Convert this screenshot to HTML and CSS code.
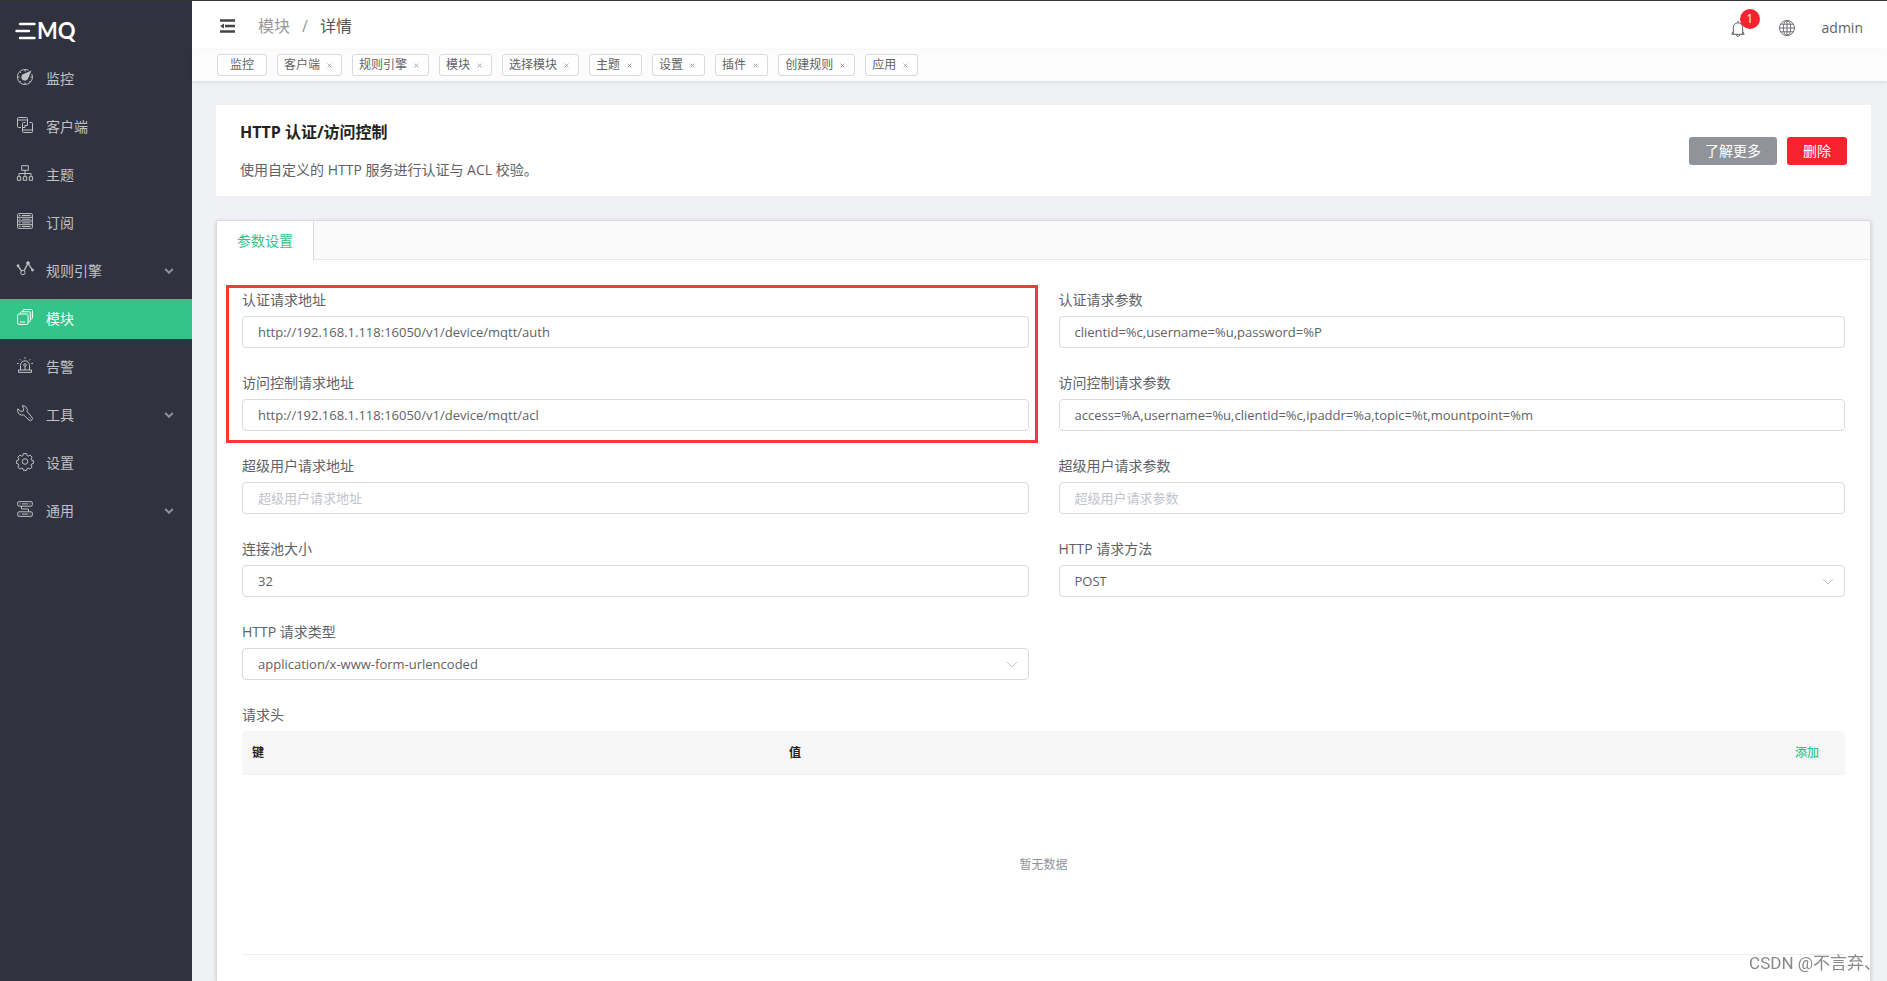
FILE: index.html
```html
<!DOCTYPE html>
<html lang="zh-CN">
<head>
<meta charset="utf-8">
<title>EMQ</title>
<link rel="stylesheet" href="styles.css">
</head>
<body>
<div class="app">
  <aside class="sidebar">
    <div class="logo">
      <svg class="logo-bars" width="22" height="18" viewBox="0 0 22 18" fill="none" stroke="#fff" stroke-width="2.4" stroke-linecap="round"><path d="M5 2H19.500M1.500 9H14M5 16H19.500"/></svg>
      <span class="logo-text">MQ</span>
    </div>
    <nav class="menu">
      <a class="item" href="#"><svg class="icon" viewBox="0 0 16 16"><path d="M11.500 1.400A7.500 7.500 0 1 0 14.800 5"/><path d="M8 .5v2M8 13.500v2M.5 8h2M13.500 8h2M2.700 2.700l1.200 1.200M2.700 13.300l1.200-1.200M13.300 13.300l-1.200-1.200"/><path class="solid" stroke="none" d="M14.500 1.500L11.200 9.200A3.500 3.500 0 1 1 7.200 4.700z"/></svg><span>监控</span></a>
      <a class="item" href="#"><svg class="icon" viewBox="0 0 16 16"><path d="M4 10.500H1.500a1 1 0 0 1-1-1v-8a1 1 0 0 1 1-1h8a1 1 0 0 1 1 1V4M.5 3h10M8.500 5.500h-2a1 1 0 0 0-1 1v8a1 1 0 0 0 1 1h8a1 1 0 0 0 1-1v-8a1 1 0 0 0-1-1h-2M5.500 13h10M5.500 10.500H8V8M10.500 4v4.500H8"/></svg><span>客户端</span></a>
      <a class="item" href="#"><svg class="icon" viewBox="0 0 16 16"><path d="M4.700.7h6.600v4.600H4.700zM8 5.300v6M2 11.500V8.500h12v3M.4 11.700h3.300v3.600H.4zM6.300 11.700h3.400v3.600H6.300zM12.300 11.700h3.300v3.600h-3.300z"/></svg><span>主题</span></a>
      <a class="item" href="#"><svg class="icon" viewBox="0 0 16 16"><rect x=".6" y=".6" width="14.800" height="14.800" rx="1"/><path d="M.5 4.300h15M.5 8h15M.5 11.700h15M5 2.500h8.500M2 2.500h1.500M5 6.200h8.500M2 6.200h1.500M5 9.900h8.500M2 9.900h1.500M5 13.500h8.500M2 13.500h1.500"/></svg><span>订阅</span></a>
      <a class="item" href="#"><svg class="icon" viewBox="0 0 16 16"><path stroke-width="1.300" d="M1 5l3.700 5.200M7.200 9.500l3.300-6.500M11.500 3l4 6"/><circle cx="5.900" cy="11.500" r="2.200"/><circle class="solid" cx="1" cy="4.700" r="1"/><circle class="solid" cx="11" cy="2" r="1.300"/><circle class="solid" cx="15.500" cy="9" r="1"/></svg><span>规则引擎</span><svg class="caret" viewBox="0 0 10 6"><path d="M1.200 1L5 4.700 8.800 1"/></svg></a>
      <a class="item active" href="#"><svg class="icon" viewBox="0 0 16 16"><rect x=".6" y="5" width="10.500" height="10.400" rx="1.500"/><path d="M3 13h5M3.300 4.500V3.800a1 1 0 0 1 1-1h8a1 1 0 0 1 1 1v8a1 1 0 0 1-1 1h-.7M6 2.500v-1a1 1 0 0 1 1-1h7.400a1 1 0 0 1 1 1v7.400a1 1 0 0 1-1 1h-.9"/></svg><span>模块</span></a>
      <a class="item" href="#"><svg class="icon" viewBox="0 0 16 16"><path d="M1.500 13h13v2.400h-13zM3.500 13V8.300a4.500 4.500 0 0 1 9 0V13M8 9.500V13M8 .2v1.600M2.600 2.200l1.200 1.200M13.400 2.200l-1.200 1.200M0 6.500h1.700M14.300 6.500H16"/><circle cx="8" cy="8" r="1.300"/></svg><span>告警</span></a>
      <a class="item" href="#"><svg class="icon" viewBox="0 0 16 16"><path d="M5.200.6a4.800 4.800 0 0 1 5 6l4.600 5.500a2 2 0 0 1-2.800 2.900L6.700 10A4.800 4.800 0 0 1 .8 3.800l3 2.700 2.500-.5.400-2.400z"/><path d="M12.500 12.500l1 1"/></svg><span>工具</span><svg class="caret" viewBox="0 0 10 6"><path d="M1.200 1L5 4.700 8.800 1"/></svg></a>
      <a class="item" href="#"><svg class="icon" viewBox="0 0 16 16"><path d="M6.500.6h3l.5 2 1.300.5 1.800-1 2 2.100-1 1.800.5 1.200 1.800.5v2.800l-1.800.5-.6 1.200 1 1.900-2 2-1.800-1-1.200.5-.5 1.800h-3l-.5-1.800-1.300-.5-1.800 1-2-2 1-1.900-.5-1.200-1.800-.5V7.700l1.800-.5.500-1.200-1-1.800 2-2.100 1.800 1L6 2.600z"/><circle cx="8" cy="8.500" r="2.800"/></svg><span>设置</span></a>
      <a class="item" href="#"><svg class="icon" viewBox="0 0 16 16"><rect x=".6" y=".6" width="14.800" height="4.600" rx="1.500"/><rect x=".6" y="10.800" width="14.800" height="4.600" rx="1.500"/><path d="M5 2.900h6M5 13.100h6M2.500 2.900h1M12.500 2.900h1M2.500 13.100h1M12.500 13.100h1M4.500 5.200V8h7v2.800"/></svg><span>通用</span><svg class="caret" viewBox="0 0 10 6"><path d="M1.200 1L5 4.700 8.800 1"/></svg></a>
    </nav>
  </aside>
  <div class="page">
    <header class="topbar">
      <button class="fold" type="button" aria-label="收起菜单"><svg width="15" height="14" viewBox="0 0 15 14"><path d="M0 1.500h15M5 7h10M0 12.500h15" stroke="#444" stroke-width="2.400"/><path d="M0 7l4-2.500v5z" fill="#444"/></svg></button>
      <div class="crumbs"><a href="#">模块</a><span class="slash">/</span><span class="here">详情</span></div>
      <div class="tools">
        <button class="bell" type="button" aria-label="告警"><svg width="14" height="17" viewBox="0 0 14 17" fill="none" stroke="#606266"><path d="M.7 14.300h12.600M2.300 14.200V7.500a4.700 4.700 0 0 1 9.400 0v6.700M7 2.700V.8M5.200 14.500a1.800 1.800 0 0 0 3.600 0M2.300 11.500L.9 14.200M11.700 11.500l1.400 2.700"/></svg><span class="badge">1</span></button>
        <button class="globe" type="button" aria-label="语言"><svg width="16" height="16" viewBox="0 0 16 16" fill="none" stroke="#606266" stroke-width=".9"><circle cx="8" cy="8" r="7.500"/><ellipse cx="8" cy="8" rx="3.700" ry="7.500"/><path d="M8 .5v15M.5 8h15M1.700 4.200h12.600M1.700 11.800h12.600"/></svg></button>
        <a class="user" href="#">admin</a>
      </div>
    </header>
    <div class="tags">
      <a class="tag home" href="#">监控</a>
      <a class="tag" href="#">客户端<svg class="close" viewBox="0 0 6 6"><path d="M.7.7l4.600 4.600M5.300.7L.7 5.300"/></svg></a>
      <a class="tag" href="#">规则引擎<svg class="close" viewBox="0 0 6 6"><path d="M.7.7l4.600 4.600M5.300.7L.7 5.300"/></svg></a>
      <a class="tag" href="#">模块<svg class="close" viewBox="0 0 6 6"><path d="M.7.7l4.600 4.600M5.300.7L.7 5.300"/></svg></a>
      <a class="tag" href="#">选择模块<svg class="close" viewBox="0 0 6 6"><path d="M.7.7l4.600 4.600M5.300.7L.7 5.300"/></svg></a>
      <a class="tag" href="#">主题<svg class="close" viewBox="0 0 6 6"><path d="M.7.7l4.600 4.600M5.300.7L.7 5.300"/></svg></a>
      <a class="tag" href="#">设置<svg class="close" viewBox="0 0 6 6"><path d="M.7.7l4.600 4.600M5.300.7L.7 5.300"/></svg></a>
      <a class="tag" href="#">插件<svg class="close" viewBox="0 0 6 6"><path d="M.7.7l4.600 4.600M5.300.7L.7 5.300"/></svg></a>
      <a class="tag" href="#">创建规则<svg class="close" viewBox="0 0 6 6"><path d="M.7.7l4.600 4.600M5.300.7L.7 5.300"/></svg></a>
      <a class="tag" href="#">应用<svg class="close" viewBox="0 0 6 6"><path d="M.7.7l4.600 4.600M5.300.7L.7 5.300"/></svg></a>
    </div>
    <main class="content">
      <section class="intro">
        <div>
          <h1>HTTP 认证/访问控制</h1>
          <p>使用自定义的 HTTP 服务进行认证与 ACL 校验。</p>
        </div>
        <div class="actions">
          <button class="btn" type="button">了解更多</button>
          <button class="btn danger" type="button">删除</button>
        </div>
      </section>
      <section class="panel">
        <div class="tabs"><button class="tab" type="button">参数设置</button></div>
        <form class="form">
          <div class="field"><label for="auth-url">认证请求地址</label><input id="auth-url" type="text" value="http://192.168.1.118:16050/v1/device/mqtt/auth"></div>
          <div class="field"><label for="auth-params">认证请求参数</label><input id="auth-params" type="text" value="clientid=%c,username=%u,password=%P"></div>
          <div class="field"><label for="acl-url">访问控制请求地址</label><input id="acl-url" type="text" value="http://192.168.1.118:16050/v1/device/mqtt/acl"></div>
          <div class="field"><label for="acl-params">访问控制请求参数</label><input id="acl-params" type="text" value="access=%A,username=%u,clientid=%c,ipaddr=%a,topic=%t,mountpoint=%m"></div>
          <div class="field"><label for="super-url">超级用户请求地址</label><input id="super-url" type="text" placeholder="超级用户请求地址"></div>
          <div class="field"><label for="super-params">超级用户请求参数</label><input id="super-params" type="text" placeholder="超级用户请求参数"></div>
          <div class="field"><label for="pool">连接池大小</label><input id="pool" type="text" value="32"></div>
          <div class="field"><label for="method">HTTP 请求方法</label><div class="select"><select id="method"><option>POST</option><option>GET</option></select><svg class="arrow" viewBox="0 0 12 8"><path d="M1 1l5 5 5-5"/></svg></div></div>
          <div class="field"><label for="ctype">HTTP 请求类型</label><div class="select"><select id="ctype"><option>application/x-www-form-urlencoded</option><option>application/json</option></select><svg class="arrow" viewBox="0 0 12 8"><path d="M1 1l5 5 5-5"/></svg></div></div>
          <div class="field wide">
            <span class="label" id="headers-label">请求头</span>
            <table class="headers" aria-labelledby="headers-label">
              <thead><tr><th class="key">键</th><th>值</th><th class="add"><button type="button">添加</button></th></tr></thead>
              <tbody><tr><td class="empty" colspan="3">暂无数据</td></tr></tbody>
            </table>
          </div>
          <div class="highlight"></div>
        </form>
      </section>
    </main>
  </div>
</div>
<div class="watermark">CSDN @不言弃、</div>
</body>
</html>
```
FILE: styles.css
```css
* { box-sizing: border-box; }

body {
  margin: 0;
  color: #606266;
  font: 14px/20px "Open Sans", "Noto Sans CJK SC", sans-serif;
}

a { color: inherit; text-decoration: none; }
button, input, select { font-family: inherit; margin: 0; }
button { cursor: pointer; }

.app {
  display: flex;
  height: 100vh;
  overflow: hidden;
  border-top: 1px solid #363636;
  background: #f0f1f5;
}

/* Sidebar */
.sidebar { flex: none; width: 192px; background: #30333f; color: #c1c2c5; }
.logo { display: flex; align-items: center; height: 58px; padding: 2px 0 0 15px; color: #fff; }
.logo-text { font: 700 22px/24px Lato, sans-serif; }
.menu { display: flex; flex-direction: column; gap: 8px; }
.item { display: flex; align-items: center; height: 40px; padding: 0 18px 0 17px; }
.item.active { background: #34c388; color: #fff; }
.icon {
  width: 16px;
  height: 16px;
  margin: 0 13px 4px 0;
  overflow: visible;
  fill: none;
  stroke: currentColor;
}
.icon .solid { fill: currentColor; }
.caret { width: 10px; height: 6px; margin-left: auto; fill: none; stroke: #909399; stroke-width: 2; }

/* Header */
.page { flex: 1; min-width: 0; display: flex; flex-direction: column; }
.topbar { flex: none; display: flex; align-items: center; height: 49px; padding: 0 24px 0 28px; background: #fff; }
.topbar button { display: flex; padding: 0; border: 0; background: none; }
.crumbs { display: flex; margin-left: 23px; font-size: 16px; line-height: 20px; color: #999; }
.slash { padding: 0 12px; }
.here { color: #555; }
.tools { display: flex; align-items: center; margin-left: auto; padding-top: 5px; }
.topbar .bell { position: relative; margin-right: 34px; }
.topbar .globe { margin-right: 27px; }
.badge {
  position: absolute;
  top: -11px;
  left: 9px;
  width: 20px;
  height: 20px;
  border-radius: 10px;
  background: #f9222f;
  color: #fff;
  font-size: 12px;
  line-height: 20px;
  text-align: center;
}
.tags {
  flex: none;
  display: flex;
  gap: 10px;
  height: 31px;
  padding: 4px 25px;
  background: #fcfcfc;
  box-shadow: 0 1px 4px rgba(0, 21, 41, .12);
}
.tag {
  display: flex;
  align-items: center;
  height: 22px;
  padding: 0 9px 0 6px;
  border: 1px solid #d8dadc;
  border-radius: 3px;
  background: #fff;
  font-size: 12px;
}
.tag.home { padding: 0 12px; }
.close { width: 5px; height: 5px; margin-left: 7px; fill: none; stroke: #999; stroke-width: 1; }

/* Content */
.content { flex: 1; display: flex; flex-direction: column; gap: 24px; padding: 24px 16px 0 24px; }
.intro {
  display: flex;
  align-items: center;
  justify-content: space-between;
  height: 91px;
  padding: 0 24px;
  background: #fff;
}
.intro h1 { margin: 0 0 18px; color: #222; font-size: 16px; line-height: 20px; }
.intro p { margin: 0; }
.actions { display: flex; gap: 10px; }
.btn {
  height: 28px;
  padding: 0 16px;
  border: 0;
  border-radius: 3px;
  background: #909399;
  color: #fff;
  font-size: 14px;
  line-height: 20px;
}
.btn.danger { background: #f9222f; }

.panel {
  flex: 1;
  border: 1px solid #d8dadc;
  border-bottom: 0;
  background: #fff;
  box-shadow: 0 2px 4px rgba(0, 0, 0, .12), 0 0 6px rgba(0, 0, 0, .04);
}
.tabs { display: flex; height: 39px; border-bottom: 1px solid #e4e7ed; background: #fafafa; }
.tab {
  height: 39px;
  padding: 0 20px 2px;
  border: 0;
  border-right: 1px solid #d8dadc;
  background: #fff;
  color: #34c388;
  font-size: 14px;
}
.form {
  position: relative;
  display: grid;
  grid-template-columns: 1fr 1fr;
  gap: 25px 30px;
  padding: 30px 25px 0;
}
.field { display: flex; flex-direction: column; gap: 6px; min-width: 0; }
.field.wide { grid-column: 1 / 3; }
.field input, .select select {
  display: block;
  width: 100%;
  height: 32px;
  padding: 0 15px;
  border: 1px solid #d8dadc;
  border-radius: 4px;
  background: #fff;
  color: #606266;
  font-size: 13px;
  appearance: none;
}
.field input::placeholder { color: #c0c4cc; }
.select { position: relative; }
.arrow {
  position: absolute;
  top: 13px;
  right: 11px;
  width: 12px;
  height: 8px;
  fill: none;
  stroke: #c0c4cc;
  pointer-events: none;
}
.headers { width: 100%; border-collapse: separate; border-spacing: 0; table-layout: fixed; font-size: 12px; }
.headers th {
  height: 44px;
  padding: 0 10px;
  border-bottom: 1px solid #ebeef5;
  background: #f7f7f7;
  color: #222;
  text-align: left;
}
.headers .key { width: 537px; }
.headers th:first-child { border-radius: 4px 0 0 4px; }
.headers th:last-child { border-radius: 0 4px 4px 0; }
.headers .add { padding-right: 26px; text-align: right; }
.add button { padding: 0; border: 0; background: none; color: #34c388; font-size: 12px; font-weight: 500; }
.headers .empty { height: 180px; padding: 0; border-bottom: 1px solid #ebeef5; color: #909399; text-align: center; }

/* Frame drawn round the two address fields */
.highlight {
  position: absolute;
  grid-column: 1 / 2;
  grid-row: 1 / 3;
  inset: -5px -9px -12px -16px;
  border: 3px solid #fb3838;
  pointer-events: none;
}

.watermark {
  position: fixed;
  right: 6px;
  bottom: 7px;
  color: #888;
  font: 17px/22px Roboto, "Noto Sans CJK SC", sans-serif;
}
```
